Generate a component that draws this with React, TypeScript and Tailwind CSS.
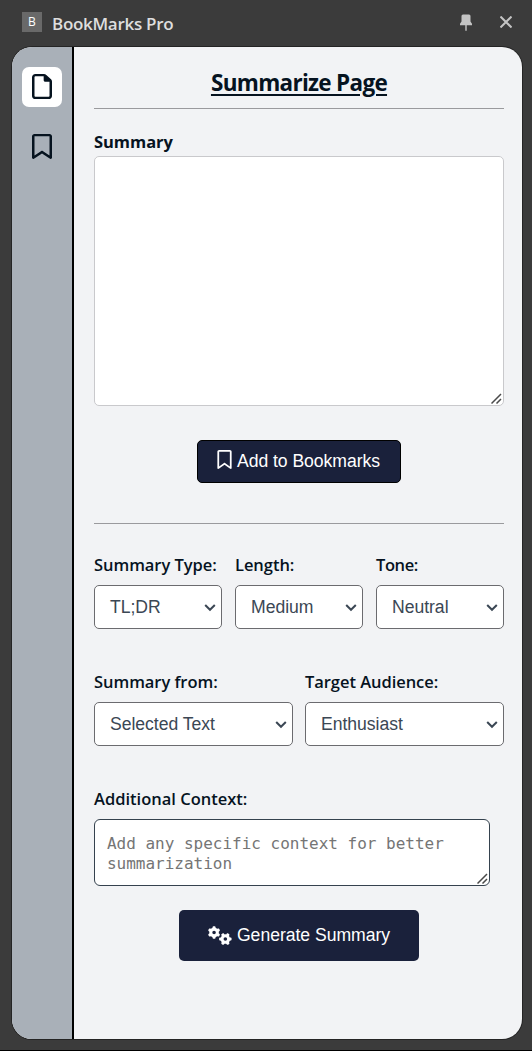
import type { ReactNode } from "react";
import { FaGears, FaRegBookmark, FaRegFile } from "react-icons/fa6";

function Chevron() {
  return (
    <svg className="h-3 w-3 shrink-0" viewBox="0 0 12 12" fill="none" stroke="#3b4754" strokeWidth="2">
      <path d="M1.2 4 6 8.8 10.8 4" />
    </svg>
  );
}

function Grip() {
  return (
    <svg className="absolute right-[1px] bottom-[1px] h-[11px] w-[11px]" viewBox="0 0 11 11" fill="none" stroke="#4a4a4a" strokeWidth="1.5">
      <path d="M0.5 10.5 10 1M5.5 10.5 10 6" />
    </svg>
  );
}

function Label({ children, className }: { children: ReactNode; className: string }) {
  return <span className={`block h-[21px] text-[16.5px] leading-[21px] whitespace-nowrap ${className}`}>{children}</span>;
}

function Select({ label, value, tracking }: { label: string; value: string; tracking: string }) {
  return (
    <div className="min-w-0 flex-1">
      <Label className={`font-semibold ${tracking}`}>{label}</Label>
      <button className="mt-[10px] flex h-11 w-full items-center justify-between rounded-[5px] border border-[#6b6b6f] bg-white pr-[5px] pl-[15px] font-['Liberation_Sans',sans-serif] text-[17.6px] tracking-[-0.03px] text-[#3b4754]">
        {value}
        <Chevron />
      </button>
    </div>
  );
}

export default function App() {
  return (
    <div className="flex h-[1051px] w-[532px] flex-col border-b border-black bg-[#3b3b3b] px-3 pr-[10px] pb-[11px] font-['Open_Sans',sans-serif] text-[#06131f]">
      <header className="flex h-[47px] shrink-0 items-center pr-[10px] pl-[10px] text-[#dedede]">
        <div className="mb-[3px] flex h-5 w-5 items-center justify-center bg-[#696969] text-[12px] text-white">B</div>
        <span className="ml-[10px] text-[17px] font-semibold tracking-[-0.3px]">BookMarks Pro</span>
        <svg className="mb-[3px] ml-auto h-[17px] w-[12px]" viewBox="0 0 12 17" fill="#c4c4c4">
          <path d="M1.5 2Q1.5 0.5 3 0.5H9Q10.5 0.5 10.5 2V7.5L12 9.7V11.2H6.7V16.7H5.3V11.2H0V9.7L1.5 7.5Z" />
        </svg>
        <svg className="mb-[3px] ml-7 h-3 w-3" viewBox="0 0 12 12" stroke="#c4c4c4" strokeWidth="2">
          <path d="M0.5 0.5 11.5 11.5M11.5 0.5 0.5 11.5" />
        </svg>
      </header>
      <main className="flex min-h-0 flex-1 overflow-hidden rounded-[20px] bg-[#f2f3f5] shadow-[0_0_0_1px_#242424]">
        <nav className="flex w-[62px] shrink-0 flex-col items-center gap-5 border-r-2 border-black bg-[#a9b0b8] pt-5">
          <button className="flex h-10 w-10 items-center justify-center rounded-[7px] bg-white pb-px">
            <FaRegFile className="h-[25px] w-5" preserveAspectRatio="none" />
          </button>
          <button className="flex h-10 w-10 items-center justify-center pb-px">
            <FaRegBookmark className="h-[25px] w-5" preserveAspectRatio="none" />
          </button>
        </nav>
        <section className="flex min-w-0 flex-1 flex-col pr-[18px] pl-5">
          <h1 className="mt-5 h-[41px] text-center text-[22.5px] leading-[32px] font-bold tracking-[-0.7px] underline decoration-2 underline-offset-[3px]">
            Summarize Page
          </h1>
          <hr className="border-[#9a9a9d]" />
          <Label className="mt-[22px] font-bold tracking-[-0.05px]">Summary</Label>
          <div className="relative mt-1 h-[250px] rounded-[5px] border border-[#c9c9cc] bg-white">
            <Grip />
          </div>
          <button className="mt-[34px] flex h-[43px] w-[204px] items-center self-center rounded-[5px] border border-black bg-[#1a213b] pl-[17px] font-['Liberation_Sans',sans-serif] text-[17.6px] tracking-[-0.05px] text-white">
            <FaRegBookmark className="mr-[3px] mb-1 h-[19px] w-[19px]" />
            Add to Bookmarks
          </button>
          <hr className="mt-10 border-[#9a9a9d]" />
          <div className="mt-[30px] flex gap-[13px]">
            <Select label="Summary Type:" value="TL;DR" tracking="tracking-[-0.05px]" />
            <Select label="Length:" value="Medium" tracking="tracking-[-0.05px]" />
            <Select label="Tone:" value="Neutral" tracking="tracking-[-0.4px]" />
          </div>
          <div className="mt-[42px] flex gap-3">
            <Select label="Summary from:" value="Selected Text" tracking="tracking-[-0.05px]" />
            <Select label="Target Audience:" value="Enthusiast" tracking="tracking-[-0.05px]" />
          </div>
          <Label className="mt-[42px] font-semibold tracking-[0px]">Additional Context:</Label>
          <div className="relative mt-[10px] h-[67px] w-[396px] rounded-[6px] border border-[#35424e] bg-white px-3 pt-[14px] font-['DejaVu_Sans_Mono',monospace] text-[16px] leading-5 tracking-[-0.01px] text-[#757575]">
            Add any specific context for better summarization
            <Grip />
          </div>
          <button className="mt-6 flex h-[51px] w-[240px] items-center justify-center self-center rounded-[5px] bg-[#1a213b] font-['Liberation_Sans',sans-serif] text-[17.6px] tracking-[-0.03px] text-white">
            <FaGears className="mr-[5px] h-[19px] w-[24px]" />
            Generate Summary
          </button>
        </section>
      </main>
    </div>
  );
}
